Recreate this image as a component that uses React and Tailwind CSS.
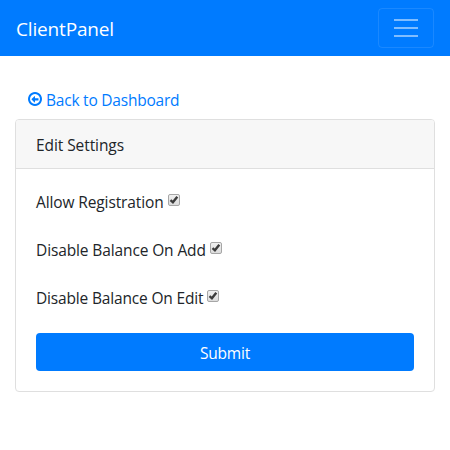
function BackIcon() {
  return (
    <svg className="mr-1 h-[14px] w-[14px] shrink-0" viewBox="128 128 1536 1536" fill="currentColor" aria-hidden="true">
      <path d="M1280 832v192q0 13-9.5 22.5t-22.5 9.5h-352v192q0 14-9 23t-23 9q-12 0-24-10l-319-319q-9-9-9-23t9-23l320-320q9-9 23-9 13 0 22.5 9.5t9.5 22.5v192h352q13 0 22.5 9.5t9.5 22.5zm160 64q0-148-73-273t-198-198-273-73-273 73-198 198-73 273 73 273 198 198 273 73 273-73 198-198 73-273zm224 0q0 209-103 385.5t-279.5 279.5-385.5 103-385.5-103-279.5-279.5-103-385.5 103-385.5 279.5-279.5 385.5-103 385.5 103 279.5 279.5 103 385.5z" />
    </svg>
  );
}

function CheckBox() {
  return (
    <span className="ml-1 flex h-3 w-3 shrink-0 -translate-y-px items-center justify-center rounded-[2px] border border-[#a6a6a6] bg-linear-to-b from-[#f0f0f0] to-[#dcdcdc]">
      <svg className="h-[10px] w-[10px]" viewBox="0 0 10 10" fill="none" stroke="#3c3c3c" strokeWidth="2.4" aria-hidden="true">
        <path d="M1.5 5.2 L3.9 7.3 L8.3 1.8" />
      </svg>
    </span>
  );
}

const settings = [
  { label: "Allow Registration", spacing: "tracking-[-0.12px]" },
  { label: "Disable Balance On Add", spacing: "tracking-[-0.12px]" },
  { label: "Disable Balance On Edit", spacing: "tracking-[-0.17px]" },
];

export default function App() {
  return (
    <div className="min-h-[450px] bg-white font-['Open_Sans','Noto_Sans',sans-serif] text-[15.5px] leading-6 text-[#212529]">
      <nav className="flex h-14 items-center justify-between bg-[#007bff] px-4">
        <a className="pt-0.5 text-[19px] tracking-[-0.17px] text-white">ClientPanel</a>
        <button className="flex h-10 w-14 flex-col items-center justify-center gap-[6px] rounded border border-white/10" aria-label="Menu">
          <span className="h-[2px] w-6 bg-white/50" />
          <span className="h-[2px] w-6 bg-white/50" />
          <span className="h-[2px] w-6 bg-white/50" />
        </button>
      </nav>
      <main className="px-[15px] pt-[31px]">
        <a className="mb-2 flex h-6 items-center pl-[13px] tracking-[-0.22px] text-[#007bff]">
          <BackIcon />
          <span className="pt-0.5">Back to Dashboard</span>
        </a>
        <section className="rounded border border-[#dfdfdf]">
          <h1 className="flex h-[49px] items-center rounded-t-[3px] border-b border-[#dfdfdf] bg-[#f7f7f7] px-5 pt-0.5 tracking-[-0.08px]">Edit Settings</h1>
          <form className="flex flex-col gap-6 p-5">
            {settings.map(({ label, spacing }) => (
              <label key={label} className="flex h-6 items-center">
                <span className={`pt-0.5 ${spacing}`}>{label}</span>
                <CheckBox />
              </label>
            ))}
            <button type="button" className="h-[38px] rounded bg-[#007bff] pt-0.5 tracking-[-0.2px] text-white">Submit</button>
          </form>
        </section>
      </main>
    </div>
  );
}
